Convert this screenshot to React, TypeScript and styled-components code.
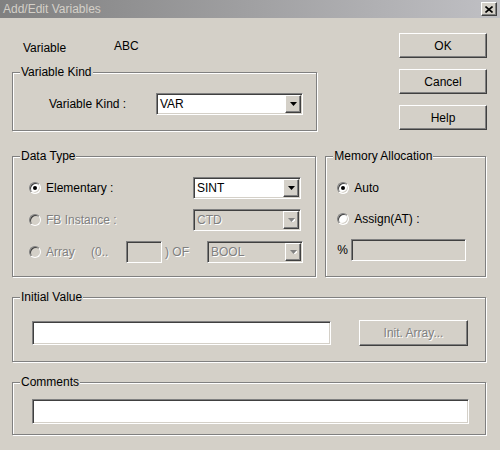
import React from "react";
import styled, { createGlobalStyle, css } from "styled-components";

// Win2000 style palette
const face = "#d4d0c8";
const shadow = "#808080";
const dark = "#404040";
const light = "#ffffff";

const GlobalStyle = createGlobalStyle`
  html, body {
    margin: 0;
    padding: 0;
    background: ${face};
  }
  body {
    font-family: "Liberation Sans", Arial, sans-serif;
    font-size: 12px;
    color: #000;
  }
`;

const Dialog = styled.div`
  width: 500px;
  height: 450px;
  background: ${face};
  overflow: hidden;
`;

const TitleBar = styled.div`
  height: 18px;
  display: flex;
  align-items: center;
  justify-content: space-between;
  padding: 0 3px;
  background: linear-gradient(to right, #808080, #c0c0c4);
  color: ${face};
  font-size: 12px;
  line-height: 18px;
`;

const raised = css`
  border: 1px solid;
  border-color: ${light} ${dark} ${dark} ${light};
  box-shadow: inset -1px -1px 0 ${shadow};
  background: ${face};
`;

const sunken = css`
  border: 1px solid;
  border-color: ${shadow} ${light} ${light} ${shadow};
  box-shadow: inset 1px 1px 0 ${dark}, inset -1px -1px 0 ${face};
`;

const CloseButton = styled.div`
  ${raised};
  box-sizing: border-box;
  width: 16px;
  height: 14px;
  display: flex;
  align-items: center;
  justify-content: center;
`;

const Content = styled.div`
  padding: 0 14px 0 12px;
`;

const TopRow = styled.div`
  display: flex;
  justify-content: space-between;
  align-items: flex-start;
`;

const LeftColumn = styled.div`
  width: 305px;
`;

const VariableRow = styled.div`
  margin-top: 22px;
  height: 16px;
  line-height: 16px;
  padding-left: 11px;
  display: flex;
`;

const FieldLabel = styled.span<{ $width?: number; $pad?: number }>`
  display: inline-block;
  flex: none;
  width: ${({ $width }) => ($width ? `${$width}px` : "auto")};
  padding-left: ${({ $pad }) => $pad || 0}px;
  box-sizing: border-box;
  white-space: nowrap;
  ${({ $disabled }: { $disabled?: boolean }) =>
    $disabled &&
    css`
      color: ${shadow};
      text-shadow: 1px 1px 0 ${light};
    `}
`;

const VariableValue = styled.span`
  margin-top: -2px;
`;

const ButtonColumn = styled.div`
  margin-top: 15px;
  margin-right: -1px;
  display: flex;
  flex-direction: column;
  gap: 11px;
`;

const PushButton = styled.button<{ $width?: number; $height?: number; $disabled?: boolean }>`
  ${raised};
  box-sizing: border-box;
  width: ${({ $width }) => $width || 88}px;
  height: ${({ $height }) => $height || 25}px;
  padding: 0;
  font-family: "Liberation Sans", Arial, sans-serif;
  font-size: 12px;
  color: ${({ $disabled }) => ($disabled ? shadow : "#000")};
  text-shadow: ${({ $disabled }) => ($disabled ? `1px 1px 0 ${light}` : "none")};
`;

const Group = styled.div<{ $width?: number; $height: number; $pad: string; $gap?: number }>`
  position: relative;
  box-sizing: border-box;
  width: ${({ $width }) => ($width ? `${$width}px` : "auto")};
  height: ${({ $height }) => $height}px;
  border: 1px solid ${shadow};
  box-shadow: inset 1px 1px 0 ${light}, 1px 1px 0 ${light};
  padding: ${({ $pad }) => $pad};
  display: flex;
  flex-direction: column;
  gap: ${({ $gap }) => $gap || 0}px;
`;

const GroupCaption = styled.span`
  position: absolute;
  top: -8px;
  left: 7px;
  padding: 0 1px;
  line-height: 14px;
  background: ${face};
  white-space: nowrap;
`;

const KindGroup = styled(Group)`
  margin-top: 16px;
`;

const MiddleRow = styled.div`
  margin-top: 25px;
  display: flex;
  gap: 9px;
`;

const Row = styled.div<{ $gap?: number }>`
  display: flex;
  align-items: center;
  height: 22px;
  gap: ${({ $gap }) => $gap || 0}px;
`;

const RadioOption = styled.div<{ $width?: number }>`
  display: flex;
  align-items: center;
  gap: 5px;
  flex: none;
  width: ${({ $width }) => ($width ? `${$width}px` : "auto")};
`;

const RadioCircle = styled.span<{ $checked?: boolean; $disabled?: boolean }>`
  box-sizing: border-box;
  width: 12px;
  height: 12px;
  flex: none;
  border-radius: 50%;
  border: 1px solid;
  border-color: ${shadow} ${light} ${light} ${shadow};
  box-shadow: inset 1px 1px 0 ${dark}, inset -1px -1px 0 ${face};
  background: ${({ $disabled }) => ($disabled ? face : light)};
  display: flex;
  align-items: center;
  justify-content: center;
  &::after {
    content: "";
    display: ${({ $checked }) => ($checked ? "block" : "none")};
    width: 4px;
    height: 4px;
    border-radius: 50%;
    background: #000;
  }
`;

const EditBox = styled.div<{ $width: number; $height?: number; $disabled?: boolean }>`
  ${sunken};
  box-sizing: border-box;
  flex: none;
  width: ${({ $width }) => $width}px;
  height: ${({ $height }) => $height || 22}px;
  background: ${({ $disabled }) => ($disabled ? face : light)};
`;

const ComboFrame = styled.div<{ $width: number; $disabled?: boolean }>`
  ${sunken};
  box-sizing: border-box;
  flex: none;
  width: ${({ $width }) => $width}px;
  height: 22px;
  padding: 1px;
  display: flex;
  align-items: stretch;
  background: ${({ $disabled }) => ($disabled ? face : light)};
`;

const ComboText = styled.span<{ $disabled?: boolean }>`
  flex: 1;
  padding-left: 2px;
  line-height: 18px;
  color: ${({ $disabled }) => ($disabled ? shadow : "#000")};
  text-shadow: ${({ $disabled }) => ($disabled ? `1px 1px 0 ${light}` : "none")};
`;

const DropButton = styled.span`
  ${raised};
  box-sizing: border-box;
  width: 16px;
  display: flex;
  align-items: center;
  justify-content: center;
`;

const PercentSign = styled.span`
  width: 14px;
  flex: none;
`;

const WideRow = styled.div`
  display: flex;
  align-items: center;
  gap: 28px;
`;

const SpacedGroup = styled(Group)`
  margin-top: 20px;
`;

const Radio = ({
  label,
  checked,
  disabled,
  width,
}: {
  label: string;
  checked?: boolean;
  disabled?: boolean;
  width?: number;
}) => (
  <RadioOption $width={width}>
    <RadioCircle $checked={checked} $disabled={disabled} />
    <FieldLabel $disabled={disabled}>{label}</FieldLabel>
  </RadioOption>
);

const Combo = ({ value, width, disabled }: { value: string; width: number; disabled?: boolean }) => (
  <ComboFrame $width={width} $disabled={disabled}>
    <ComboText $disabled={disabled}>{value}</ComboText>
    <DropButton>
      <svg width="7" height="4" viewBox="0 0 7 4">
        {disabled && <polygon points="1,1 8,1 4.5,5" fill={light} />}
        <polygon points="0,0 7,0 3.5,4" fill={disabled ? shadow : "#000"} />
      </svg>
    </DropButton>
  </ComboFrame>
);

export default function App() {
  return (
    <Dialog>
      <GlobalStyle />
      <TitleBar>
        <span>Add/Edit Variables</span>
        <CloseButton>
          <svg width="8" height="7" viewBox="0 0 8 7">
            <path d="M0.5 0.5 L7.5 6.5 M7.5 0.5 L0.5 6.5" stroke="#000" strokeWidth="1.6" />
          </svg>
        </CloseButton>
      </TitleBar>
      <Content>
        <TopRow>
          <LeftColumn>
            <VariableRow>
              <FieldLabel $width={91}>Variable</FieldLabel>
              <VariableValue>ABC</VariableValue>
            </VariableRow>
            <KindGroup $height={59} $pad="20px 0 0 36px">
              <GroupCaption>Variable Kind</GroupCaption>
              <Row>
                <FieldLabel $width={107}>Variable Kind :</FieldLabel>
                <Combo value="VAR" width={147} />
              </Row>
            </KindGroup>
          </LeftColumn>
          <ButtonColumn>
            <PushButton>OK</PushButton>
            <PushButton>Cancel</PushButton>
            <PushButton>Help</PushButton>
          </ButtonColumn>
        </TopRow>

        <MiddleRow>
          <Group $width={305} $height={121} $pad="20px 0 0 16px" $gap={10}>
            <GroupCaption>Data Type</GroupCaption>
            <Row>
              <Radio label="Elementary :" checked width={164} />
              <Combo value="SINT" width={108} />
            </Row>
            <Row>
              <Radio label="FB Instance :" disabled width={164} />
              <Combo value="CTD" width={108} disabled />
            </Row>
            <Row>
              <Radio label="Array" disabled width={62} />
              <FieldLabel $width={35} $disabled>
                (0..
              </FieldLabel>
              <EditBox $width={36} $disabled />
              <FieldLabel $width={45} $pad={3} $disabled>
                ) OF
              </FieldLabel>
              <Combo value="BOOL" width={96} disabled />
            </Row>
          </Group>
          <Group $width={161} $height={121} $pad="20px 0 0 11px" $gap={9}>
            <GroupCaption>Memory Allocation</GroupCaption>
            <Row>
              <Radio label="Auto" checked />
            </Row>
            <Row>
              <Radio label="Assign(AT) :" />
            </Row>
            <Row>
              <PercentSign>%</PercentSign>
              <EditBox $width={115} $disabled />
            </Row>
          </Group>
        </MiddleRow>

        <SpacedGroup $height={65} $pad="22px 0 0 19px">
          <GroupCaption>Initial Value</GroupCaption>
          <WideRow>
            <EditBox $width={299} $height={24} />
            <PushButton $width={109} $height={26} $disabled>
              Init. Array...
            </PushButton>
          </WideRow>
        </SpacedGroup>

        <SpacedGroup $height={53} $pad="16px 0 0 19px">
          <GroupCaption>Comments</GroupCaption>
          <EditBox $width={437} $height={25} />
        </SpacedGroup>
      </Content>
    </Dialog>
  );
}
